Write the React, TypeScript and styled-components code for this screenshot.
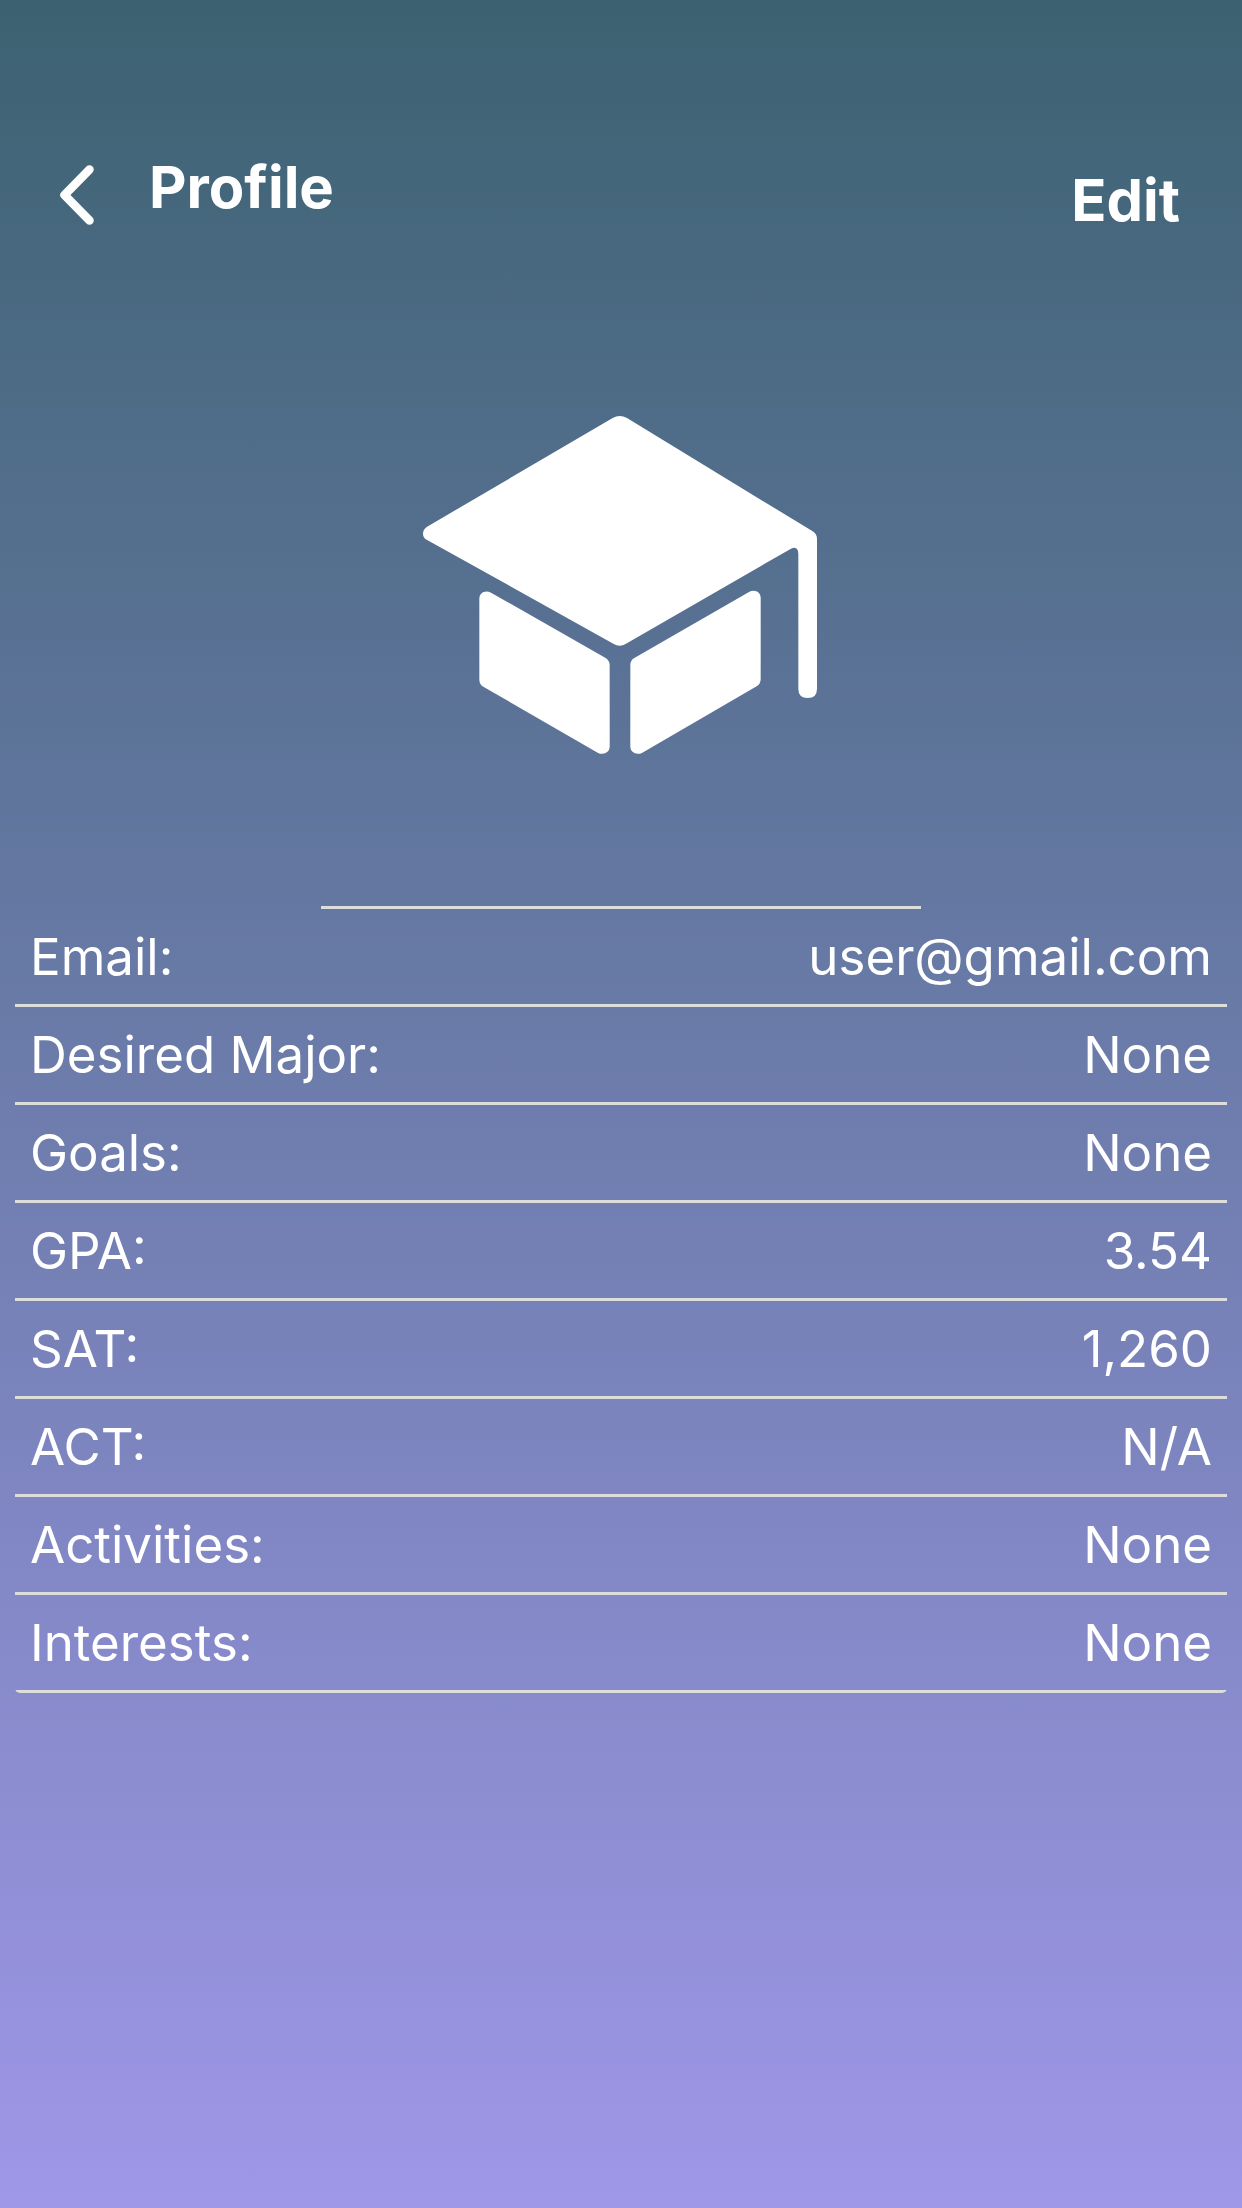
import React from "react";
import styled, { createGlobalStyle } from "styled-components";

const GlobalStyle = createGlobalStyle`
  *, *::before, *::after { box-sizing: border-box; }
  body { margin: 0; }
`;

const Page = styled.main`
  min-height: 100vh;
  padding-bottom: 60px;
  background: linear-gradient(180deg, #3c6271 0%, #9f97e8 100%);
  color: #fff;
  font-family: Inter, "Liberation Sans", sans-serif;
`;

const Header = styled.header`
  display: flex;
  align-items: flex-start;
  padding: 150px 62px 0 60px;
`;

const PlainButton = styled.button`
  padding: 0;
  border: 0;
  background: none;
  color: inherit;
  font: inherit;
  cursor: pointer;
`;

const BackButton = styled(PlainButton)`
  display: flex;
  align-items: center;
  width: 89px;
  height: 90px;
`;

const Title = styled.h1`
  flex: 1;
  margin: 0;
  font-size: 58px;
  font-weight: 700;
  line-height: 74px;
`;

const EditButton = styled(PlainButton)`
  font-size: 58px;
  font-weight: 700;
  line-height: 100px;
`;

const Hero = styled.div`
  display: flex;
  justify-content: center;
  padding: 166px 0 152px;
`;

const NameLine = styled.hr`
  width: 600px;
  max-width: 100%;
  height: 3px;
  margin: 0 auto;
  border: 0;
  background: #dddddb;
`;

const Details = styled.dl`
  margin: 0 15px;
  border-radius: 0 0 5px 5px;
  overflow: hidden;
`;

const Row = styled.div`
  display: flex;
  justify-content: space-between;
  padding: 1px 15px 0;
  border-bottom: 3px solid #dddddb;
  font-size: 51px;
  line-height: 94px;
`;

const Label = styled.dt``;

const Value = styled.dd`
  margin: 0;
`;

const details = [
  ["Email", "user@gmail.com"],
  ["Desired Major", "None"],
  ["Goals", "None"],
  ["GPA", "3.54"],
  ["SAT", "1,260"],
  ["ACT", "N/A"],
  ["Activities", "None"],
  ["Interests", "None"],
];

const Chevron = () => (
  <svg width="34" height="60" viewBox="0 0 34 60" fill="none" aria-hidden="true">
    <path
      d="M29.5 4.5 L4.5 30 L29.5 55.5"
      stroke="currentColor"
      strokeWidth="8.5"
      strokeLinecap="round"
      strokeLinejoin="round"
    />
  </svg>
);

const GraduationCap = () => (
  <svg width="396" height="338" viewBox="69 78 1188 1014" fill="currentColor" role="img" aria-label="Graduation cap">
    <path d="M638 84 Q659 72 681 84 L1238 424 Q1251 433 1251 446 L1251 896 Q1251 924 1223 924 Q1195 924 1195 896 L1195 492 Q1194 466 1173 476 L678 761 Q659 773 640 761 L80 449 Q69 443 69 431 Q69 419 80 411 Z" />
    <path d="M238 626 C238 608 256 599 273 608 L617 804 Q629 812 629 826 L629 1069 C629 1088 610 1097 593 1088 L250 890 Q238 883 238 869 Z" />
    <path d="M1082 624 C1082 606 1064 597 1047 606 L703 804 Q691 811 691 825 L691 1069 C691 1088 710 1097 727 1088 L1070 889 Q1082 882 1082 868 Z" />
  </svg>
);

export default function App() {
  return (
    <>
      <GlobalStyle />
      <Page>
        <Header>
          <BackButton type="button" aria-label="Back">
            <Chevron />
          </BackButton>
          <Title>Profile</Title>
          <EditButton type="button">Edit</EditButton>
        </Header>
        <Hero>
          <GraduationCap />
        </Hero>
        <NameLine />
        <Details>
          {details.map(([label, value]) => (
            <Row key={label}>
              <Label>{label}:</Label>
              <Value>{value}</Value>
            </Row>
          ))}
        </Details>
      </Page>
    </>
  );
}
